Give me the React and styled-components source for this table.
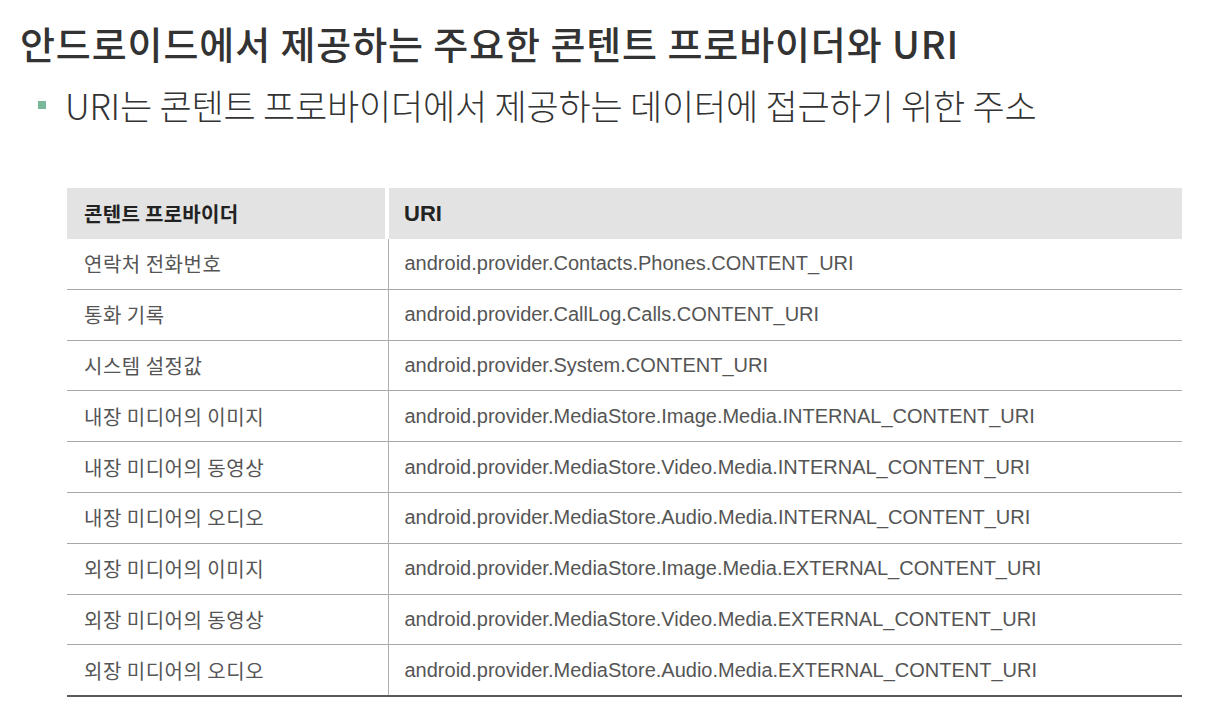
import styled, { createGlobalStyle } from "styled-components";

const GlobalStyle = createGlobalStyle`
  body {
    margin: 0;
    background: #ffffff;
    font-family: "Noto Sans CJK KR", "Noto Sans", sans-serif;
  }
`;

const Page = styled.main`
  width: 1220px;
  height: 728px;
  overflow: hidden;
  box-sizing: border-box;
  padding: 17px 0 0 20px;
`;

const Title = styled.h1`
  margin: 0;
  font-size: 38px;
  font-weight: 500;
  line-height: 52px;
  color: #333333;
  letter-spacing: 0.9px;
  white-space: nowrap;
`;

const Bullet = styled.p`
  display: flex;
  align-items: center;
  gap: 19px;
  margin: 12px 0 0 18px;
  font-size: 35px;
  font-weight: 300;
  line-height: 48px;
  color: #333333;
  letter-spacing: -0.2px;
  white-space: nowrap;

  &::before {
    content: "";
    width: 8px;
    height: 8px;
    background: #7ab89a;
    flex: none;
  }
`;

const Table = styled.table`
  margin: 59px 0 0 47px;
  width: 1115px;
  table-layout: fixed;
  border-collapse: collapse;
  border-bottom: 2px solid #5a5a5a;
`;

const HeadCell = styled.th`
  height: 51px;
  padding: 0 0 0 ${(p) => (p.$latin ? "16px" : "17px")};
  text-align: left;
  background: #e3e3e3;
  font-size: ${(p) => (p.$latin ? "22px" : "20px")};
  font-weight: 700;
  color: #222222;
  letter-spacing: ${(p) => (p.$latin ? "0" : "0.3px")};
  font-family: ${(p) =>
    p.$latin ? '"Liberation Sans", Arial, sans-serif' : '"Noto Sans CJK KR", sans-serif'};
  box-shadow: ${(p) =>
    p.$latin ? "inset 1px 0 0 #ffffff" : "inset -3px 0 0 #ffffff"};
`;

const Row = styled.tr`
  border-top: 1px solid #a8a8a8;
  &:first-child {
    border-top: none;
  }
`;

const NameCell = styled.td`
  height: 49.8px;
  padding: 0 0 0 17px;
  font-size: 20px;
  color: #555555;
  letter-spacing: 0.5px;
  border-right: 1px solid #b0b0b0;
`;

const UriCell = styled.td`
  height: 49.8px;
  padding: 0 0 0 16px;
  font-family: "Liberation Sans", Arial, sans-serif;
  font-size: 20px;
  color: #555555;
  white-space: nowrap;
`;

const rows = [
  ["연락처 전화번호", "android.provider.Contacts.Phones.CONTENT_URI"],
  ["통화 기록", "android.provider.CallLog.Calls.CONTENT_URI"],
  ["시스템 설정값", "android.provider.System.CONTENT_URI"],
  ["내장 미디어의 이미지", "android.provider.MediaStore.Image.Media.INTERNAL_CONTENT_URI"],
  ["내장 미디어의 동영상", "android.provider.MediaStore.Video.Media.INTERNAL_CONTENT_URI"],
  ["내장 미디어의 오디오", "android.provider.MediaStore.Audio.Media.INTERNAL_CONTENT_URI"],
  ["외장 미디어의 이미지", "android.provider.MediaStore.Image.Media.EXTERNAL_CONTENT_URI"],
  ["외장 미디어의 동영상", "android.provider.MediaStore.Video.Media.EXTERNAL_CONTENT_URI"],
  ["외장 미디어의 오디오", "android.provider.MediaStore.Audio.Media.EXTERNAL_CONTENT_URI"],
];

export default function App() {
  return (
    <>
      <GlobalStyle />
      <Page>
        <Title>안드로이드에서 제공하는 주요한 콘텐트 프로바이더와 URI</Title>
        <Bullet>URI는 콘텐트 프로바이더에서 제공하는 데이터에 접근하기 위한 주소</Bullet>
        <Table>
          <colgroup>
            <col style={{ width: "321px" }} />
            <col />
          </colgroup>
          <thead>
            <tr>
              <HeadCell>콘텐트 프로바이더</HeadCell>
              <HeadCell $latin>URI</HeadCell>
            </tr>
          </thead>
          <tbody>
            {rows.map(([name, uri]) => (
              <Row key={uri}>
                <NameCell>{name}</NameCell>
                <UriCell>{uri}</UriCell>
              </Row>
            ))}
          </tbody>
        </Table>
      </Page>
    </>
  );
}
